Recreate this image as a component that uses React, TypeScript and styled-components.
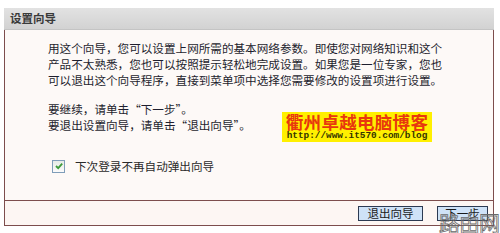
import styled, { createGlobalStyle } from "styled-components";
import { ReactElement } from "react";

const CJK = `"Noto Sans CJK SC", "DejaVu Sans", sans-serif`;

export default function App(): JSX.Element {
    return (
        <>
            <GlobalStyle />
            <Page>
                <Panel>
                    <Header>设置向导</Header>
                    <Body>
                        <Paragraph>
                            <Line>用这个向导，您可以设置上网所需的基本网络参数。即使您对网络知识和这个</Line>
                            <Line>产品不太熟悉，您也可以按照提示轻松地完成设置。如果您是一位专家，您也</Line>
                            <Line>可以退出这个向导程序，直接到菜单项中选择您需要修改的设置项进行设置。</Line>
                        </Paragraph>
                        <Paragraph $gap={13}>
                            <Line>要继续，请单击“下一步”。</Line>
                            <Line>要退出设置向导，请单击“退出向导”。</Line>
                        </Paragraph>
                        <CheckRow>
                            <CheckBox checked />
                            <CheckLabel>下次登录不再自动弹出向导</CheckLabel>
                        </CheckRow>
                        <BlogStamp>
                            <StampTitle>衢州卓越电脑博客</StampTitle>
                            <StampUrl>http://www.it570.com/blog</StampUrl>
                        </BlogStamp>
                    </Body>
                    <Footer>
                        <Button>退出向导</Button>
                        <Button $narrow>下一步</Button>
                        <Watermark>路由网</Watermark>
                    </Footer>
                </Panel>
            </Page>
        </>
    );
}

/*        ---------------------        COMPONENTES        ---------------------        */

interface CheckBoxProps {
    checked?: boolean;
}

const CheckBox = ({ checked }: CheckBoxProps): ReactElement => (
    <Box>
        {checked && (
            <svg width="10" height="10" viewBox="0 0 10 10">
                <path d="M2 5 L4.2 7.2 L8.2 2.6" fill="none" stroke="#3d9a3a" strokeWidth="1.8" />
            </svg>
        )}
    </Box>
);

/*        ---------------------        ESTILOS        ---------------------        */

const GlobalStyle = createGlobalStyle`
    body {
        margin: 0;
        background: #ffffff;
        font-family: ${CJK};
    }
`;

const Page = styled.div`
    width: 500px;
    height: 233px;
    padding: 8px 0 0 4px;
    box-sizing: border-box;
    overflow: hidden;
`;

const Panel = styled.div`
    width: 490px;
    display: flex;
    flex-direction: column;
`;

const Header = styled.div`
    height: 21px;
    line-height: 21px;
    padding-left: 6px;
    background: linear-gradient(#e2e2e2, #d2d2d2);
    border-bottom: 1px solid #c4c4c4;
    font-size: 11.5px;
    font-weight: bold;
    color: #3a3a3a;
`;

const Body = styled.div`
    position: relative;
    height: 171px;
    box-sizing: border-box;
    padding: 10px 0 0 43px;
    background: #fdf9f7;
    border: 1px solid #7d4d4d;
    border-top: none;
`;

const Paragraph = styled.div<{ $gap?: number }>`
    margin-top: ${(p) => p.$gap ?? 0}px;
    font-size: 11.6px;
    line-height: 16px;
    color: #1e1e2e;
`;

const Line = styled.div`
    white-space: nowrap;
`;

const CheckRow = styled.div`
    display: flex;
    align-items: center;
    gap: 10px;
    margin-top: 25px;
    padding-left: 4px;
    height: 16px;
`;

const Box = styled.span`
    width: 11px;
    height: 11px;
    display: flex;
    align-items: center;
    justify-content: center;
    border: 1px solid #7f9db9;
    background: linear-gradient(#e6ebe6, #fbfbfb);
`;

const CheckLabel = styled.span`
    font-size: 11.6px;
    color: #2a2a2a;
`;

const BlogStamp = styled.div`
    position: absolute;
    left: 277px;
    top: 82px;
    width: 150px;
    height: 30px;
    background: #fff000;
    display: flex;
    flex-direction: column;
    align-items: center;
`;

const StampTitle = styled.div`
    font-size: 17.5px;
    font-weight: bold;
    line-height: 19px;
    color: #e8380d;
    letter-spacing: 0.3px;
`;

const StampUrl = styled.div`
    font-family: "Liberation Mono", monospace;
    font-size: 9.4px;
    font-weight: bold;
    line-height: 10px;
    color: #333300;
`;

const Footer = styled.div`
    position: relative;
    height: 25px;
    box-sizing: border-box;
    display: flex;
    align-items: center;
    justify-content: flex-end;
    gap: 14px;
    padding-right: 5px;
    background: #fdf6f3;
    border: 1px solid #7d4d4d;
    border-top: none;
`;

const Button = styled.div<{ $narrow?: boolean }>`
    width: ${(p) => (p.$narrow ? 51 : 65)}px;
    height: 15px;
    box-sizing: border-box;
    display: flex;
    align-items: center;
    justify-content: center;
    background: #cfe2f7;
    border: 1px solid #2c3a52;
    font-size: 11.5px;
    color: #1a1a1a;
`;

const Watermark = styled.div`
    position: absolute;
    right: -6px;
    bottom: -8px;
    font-size: 21px;
    line-height: 22px;
    color: transparent;
    -webkit-text-stroke: 0.8px #6a6a6a;
    letter-spacing: -1px;
    pointer-events: none;
`;
